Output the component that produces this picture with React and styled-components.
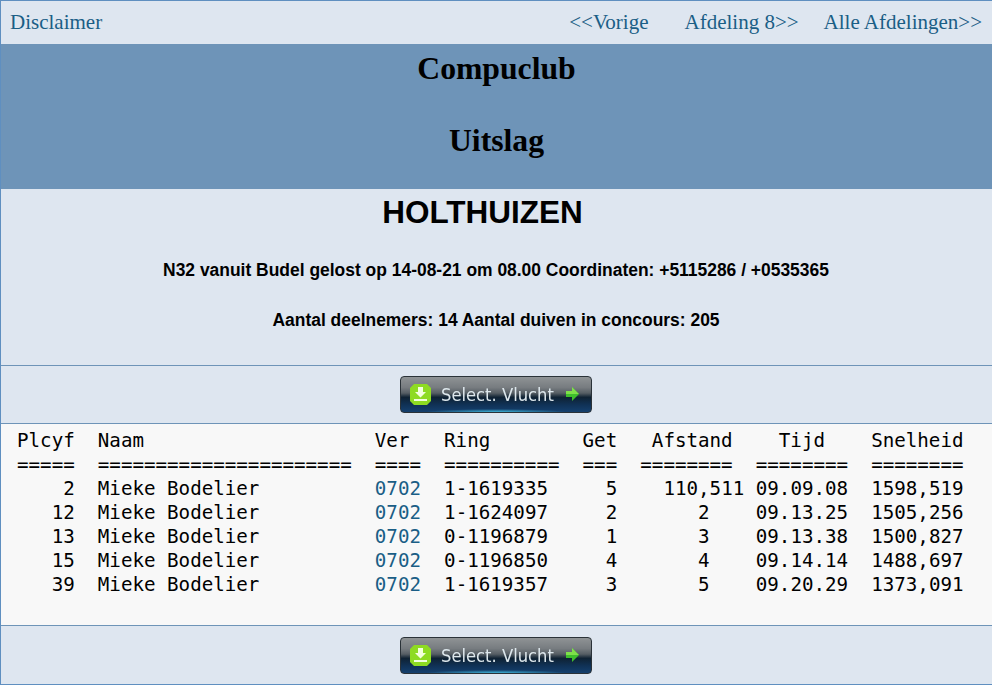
import styled, { createGlobalStyle } from "styled-components";

const rows = [
  ["    2", "1-1619335", "5", "    110,511", "09.09.08", "1598,519"],
  ["   12", "1-1624097", "2", "       2   ", "09.13.25", "1505,256"],
  ["   13", "0-1196879", "1", "       3   ", "09.13.38", "1500,827"],
  ["   15", "0-1196850", "4", "       4   ", "09.14.14", "1488,697"],
  ["   39", "1-1619357", "3", "       5   ", "09.20.29", "1373,091"],
];

const GlobalStyle = createGlobalStyle`
  html, body {
    margin: 0;
    padding: 0;
    background: #dee6f0;
  }
`;

function SelectButton() {
  return (
    <FlightButton>
      <svg width="21" height="21" viewBox="0 0 21 21">
        <path d="M4 0h13l4 4v13l-4 4H4l-4-4V4z" fill="#8edb22" />
        <path d="M8 3h5v5h3l-5.500 5.500L5 8h3z" fill="#f2ffdc" />
        <rect x="4" y="15" width="13" height="2" fill="#f2ffdc" />
      </svg>
      <span>Select. Vlucht</span>
      <svg width="15" height="16" viewBox="0 0 15 16">
        <path d="M1 5h6V1l7 7-7 7v-4H1z" fill="#3fbf2c" />
        <path d="M1 5h6V1l7 7H1z" fill="#7fe04a" />
      </svg>
    </FlightButton>
  );
}

export default function App() {
  return (
    <Page>
      <GlobalStyle />
      <TopNav>
        <NavLink href="#">Disclaimer</NavLink>
        <NavRight>
          <NavLink href="#">&lt;&lt;Vorige</NavLink>
          <NavLink href="#">Afdeling 8&gt;&gt;</NavLink>
          <NavLink href="#">Alle Afdelingen&gt;&gt;</NavLink>
        </NavRight>
      </TopNav>
      <Banner>
        <h1>Compuclub</h1>
        <h1>Uitslag</h1>
      </Banner>
      <Info>
        <h2>HOLTHUIZEN</h2>
        <p>N32 vanuit Budel gelost op 14-08-21 om 08.00 Coordinaten: +5115286 / +0535365</p>
        <p>Aantal deelnemers: 14 Aantal duiven in concours: 205</p>
      </Info>
      <ButtonBar>
        <SelectButton />
      </ButtonBar>
      <Results>
        {"Plcyf  Naam                    Ver   Ring        Get   Afstand    Tijd    Snelheid\n"}
        {"=====  ======================  ====  ==========  ===  ========  ========  ========\n"}
        {rows.map((r) => (
          <span key={r[1]}>
            {r[0]}  Mieke Bodelier          <VerLink href="#">0702</VerLink>  {r[1]}     {r[2]}{r[3]} {r[4]}  {r[5]}
            {"\n"}
          </span>
        ))}
      </Results>
      <ButtonBar $last>
        <SelectButton />
      </ButtonBar>
    </Page>
  );
}

const Page = styled.div`
  width: 992px;
  height: 685px;
  box-sizing: border-box;
  border: 1px solid #5f8fc0;
  border-right: 0;
  display: flex;
  flex-direction: column;
  background: #dee6f0;
  overflow: hidden;
`;

const TopNav = styled.div`
  height: 43px;
  flex: none;
  display: flex;
  justify-content: space-between;
  align-items: center;
  padding: 0 10px 0 9px;
`;

const NavRight = styled.div`
  display: flex;
  gap: 35px;

  a:first-child {
    margin-right: 1px;
  }

  a:last-child {
    margin-left: -10px;
  }
`;

const NavLink = styled.a`
  font-family: "Liberation Serif", serif;
  font-size: 21px;
  color: #1a5e86;
  text-decoration: none;
`;

const Banner = styled.div`
  height: 145px;
  flex: none;
  box-sizing: border-box;
  padding-top: 6px;
  background: #6e94b8;
  display: flex;
  flex-direction: column;
  align-items: center;
  gap: 35px;

  h1 {
    margin: 0;
    font-family: "Liberation Serif", serif;
    font-size: 31.7px;
    line-height: 37px;
    color: #000;
  }
`;

const Info = styled.div`
  height: 177px;
  flex: none;
  box-sizing: border-box;
  border-bottom: 1px solid #6e94b8;
  display: flex;
  flex-direction: column;
  align-items: center;
  font-family: "Liberation Sans", sans-serif;
  color: #000;

  h2 {
    margin: 5px 28px 0 0;
    font-size: 31.5px;
    line-height: 37px;
    font-weight: bold;
  }

  p {
    margin: 0 1px 0 0;
    font-size: 17.45px;
    line-height: 20px;
    font-weight: bold;
  }

  h2 + p {
    margin-top: 29px;
  }

  p + p {
    margin-top: 30px;
  }
`;

const ButtonBar = styled.div`
  height: ${(p) => (p.$last ? "58px" : "57px")};
  flex: none;
  box-sizing: border-box;
  display: flex;
  justify-content: center;
  align-items: center;
  padding-right: 2px;
  padding-bottom: ${(p) => (p.$last ? "0" : "1px")};
`;

const FlightButton = styled.div`
  width: 192px;
  height: 37px;
  box-sizing: border-box;
  padding: 0 9px;
  display: flex;
  align-items: center;
  border: 1px solid #2a3238;
  border-radius: 4px;
  background:
    radial-gradient(ellipse 70px 3px at 50% 100%, #3fb4d8 0%, transparent 100%),
    linear-gradient(
      #8f9395 0%,
      #777c80 30%,
      #565e64 46%,
      #0f2233 58%,
      #103257 80%,
      #15406e 100%
    );
  font-family: "DejaVu Sans", sans-serif;
  font-size: 18px;
  font-weight: normal;
  color: #dde7ec;
  white-space: nowrap;

  span {
    margin-left: 10px;
    margin-right: 8px;
    width: 116px;
    display: inline-block;
    transform: scaleX(0.91);
    transform-origin: left;
    filter: blur(0.3px);
  }

  svg {
    flex: none;
  }
`;

const Results = styled.pre`
  flex: none;
  height: 203px;
  margin: 0;
  box-sizing: border-box;
  padding: 5px 0 0 16px;
  background: #f8f8f8;
  border-top: 1px solid #6e94b8;
  border-bottom: 1px solid #6e94b8;
  font-family: "DejaVu Sans Mono", monospace;
  font-size: 19.18px;
  line-height: 24px;
  color: #000;
`;

const VerLink = styled.a`
  color: #1a5e86;
  text-decoration: none;
`;
